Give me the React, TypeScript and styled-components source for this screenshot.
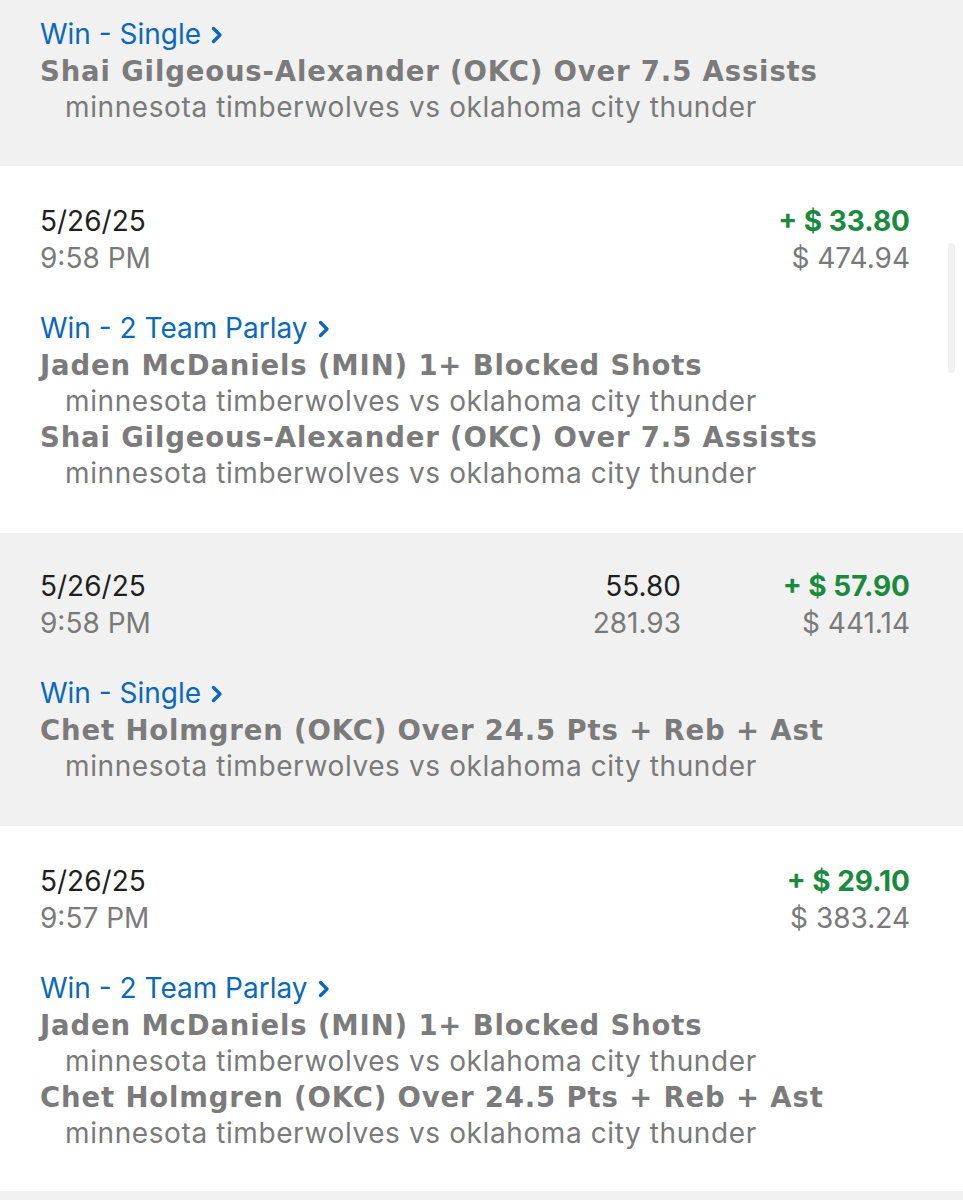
import React from "react";
import styled, { createGlobalStyle } from "styled-components";

const Global = createGlobalStyle`
  html, body { margin: 0; padding: 0; background: #ffffff; }
  body { font-family: Inter, "Liberation Sans", sans-serif; -webkit-font-smoothing: antialiased; }
`;

const Page = styled.div`
  width: 963px;
  height: 1200px;
  overflow: hidden;
  position: relative;
  display: flex;
  flex-direction: column;
`;

const Card = styled.section<{ $shade: boolean; $pt: number; $pb: number }>`
  background: ${(p) => (p.$shade ? "#f1f1f1" : "#ffffff")};
  padding: ${(p) => p.$pt}px 53px ${(p) => p.$pb}px 40px;
  display: flex;
  flex-direction: column;
`;

const Head = styled.div`
  display: grid;
  grid-template-columns: 1fr auto 229px;
  margin-bottom: 33px;
`;

const Stack = styled.div<{ $align?: string }>`
  display: flex;
  flex-direction: column;
  align-items: ${(p) => p.$align || "flex-start"};
`;

const Primary = styled.span`
  font-size: 28px;
  line-height: 37px;
  color: #1f1f1f;
`;

const Secondary = styled.span`
  font-size: 28px;
  line-height: 37px;
  color: #7a7a7a;
`;

const Gain = styled.span`
  font-size: 28px;
  line-height: 37px;
  font-weight: 700;
  color: #1a8a3e;
`;

const TypeLink = styled.div`
  display: flex;
  align-items: center;
  gap: 10px;
  font-size: 28px;
  line-height: 37px;
  color: #0b68bd;
`;

const Leg = styled.div`
  font-family: "DejaVu Sans", Verdana, sans-serif;
  font-weight: 700;
  font-size: 27.5px;
  line-height: 36px;
  color: #7b7b7b;
  letter-spacing: 0.85px;
`;

const Game = styled.div`
  font-size: 28px;
  line-height: 36px;
  color: #7a7a7a;
  letter-spacing: 0.6px;
  padding-left: 25px;
`;

const Scroll = styled.div`
  position: absolute;
  right: 8px;
  top: 243px;
  width: 7px;
  height: 130px;
  border-radius: 4px;
  background: #f1f1f1;
`;

const Chevron = () => (
  <svg width="12" height="18" viewBox="0 0 12 18" fill="none">
    <path d="M2.5 2.5 L9 9 L2.5 15.5" stroke="#0b68bd" strokeWidth="3.4" strokeLinecap="round" strokeLinejoin="round" />
  </svg>
);

type Bet = {
  date?: string;
  time?: string;
  mid?: [string, string];
  gain?: string;
  bal?: string;
  type: string;
  legs: string[];
  shade: boolean;
  pt: number;
  pb: number;
};

const GAME = "minnesota timberwolves vs oklahoma city thunder";
const JADEN = "Jaden McDaniels (MIN) 1+ Blocked Shots";
const SHAI = "Shai Gilgeous-Alexander (OKC) Over 7.5 Assists";
const CHET = "Chet Holmgren (OKC) Over 24.5 Pts + Reb + Ast";

const bets: Bet[] = [
  { type: "Win - Single", legs: [SHAI], shade: true, pt: 16, pb: 41 },
  { date: "5/26/25", time: "9:58 PM", gain: "+ $ 33.80", bal: "$ 474.94", type: "Win - 2 Team Parlay", legs: [JADEN, SHAI], shade: false, pt: 37, pb: 42 },
  { date: "5/26/25", time: "9:58 PM", mid: ["55.80", "281.93"], gain: "+ $ 57.90", bal: "$ 441.14", type: "Win - Single", legs: [CHET], shade: true, pt: 35, pb: 42 },
  { date: "5/26/25", time: "9:57 PM", gain: "+ $ 29.10", bal: "$ 383.24", type: "Win - 2 Team Parlay", legs: [JADEN, CHET], shade: false, pt: 37, pb: 40 },
];

export default function App() {
  return (
    <>
      <Global />
      <Page>
        {bets.map((b, i) => (
          <Card key={i} $shade={b.shade} $pt={b.pt} $pb={b.pb}>
            {b.date && (
              <Head>
                <Stack>
                  <Primary>{b.date}</Primary>
                  <Secondary>{b.time}</Secondary>
                </Stack>
                <Stack $align="flex-end">
                  {b.mid && (
                    <>
                      <Primary>{b.mid[0]}</Primary>
                      <Secondary>{b.mid[1]}</Secondary>
                    </>
                  )}
                </Stack>
                <Stack $align="flex-end">
                  <Gain>{b.gain}</Gain>
                  <Secondary>{b.bal}</Secondary>
                </Stack>
              </Head>
            )}
            <TypeLink>
              {b.type}
              <Chevron />
            </TypeLink>
            {b.legs.map((l, j) => (
              <React.Fragment key={j}>
                <Leg>{l}</Leg>
                <Game>{GAME}</Game>
              </React.Fragment>
            ))}
          </Card>
        ))}
        <Card $shade={true} $pt={20} $pb={20} />
        <Scroll />
      </Page>
    </>
  );
}
